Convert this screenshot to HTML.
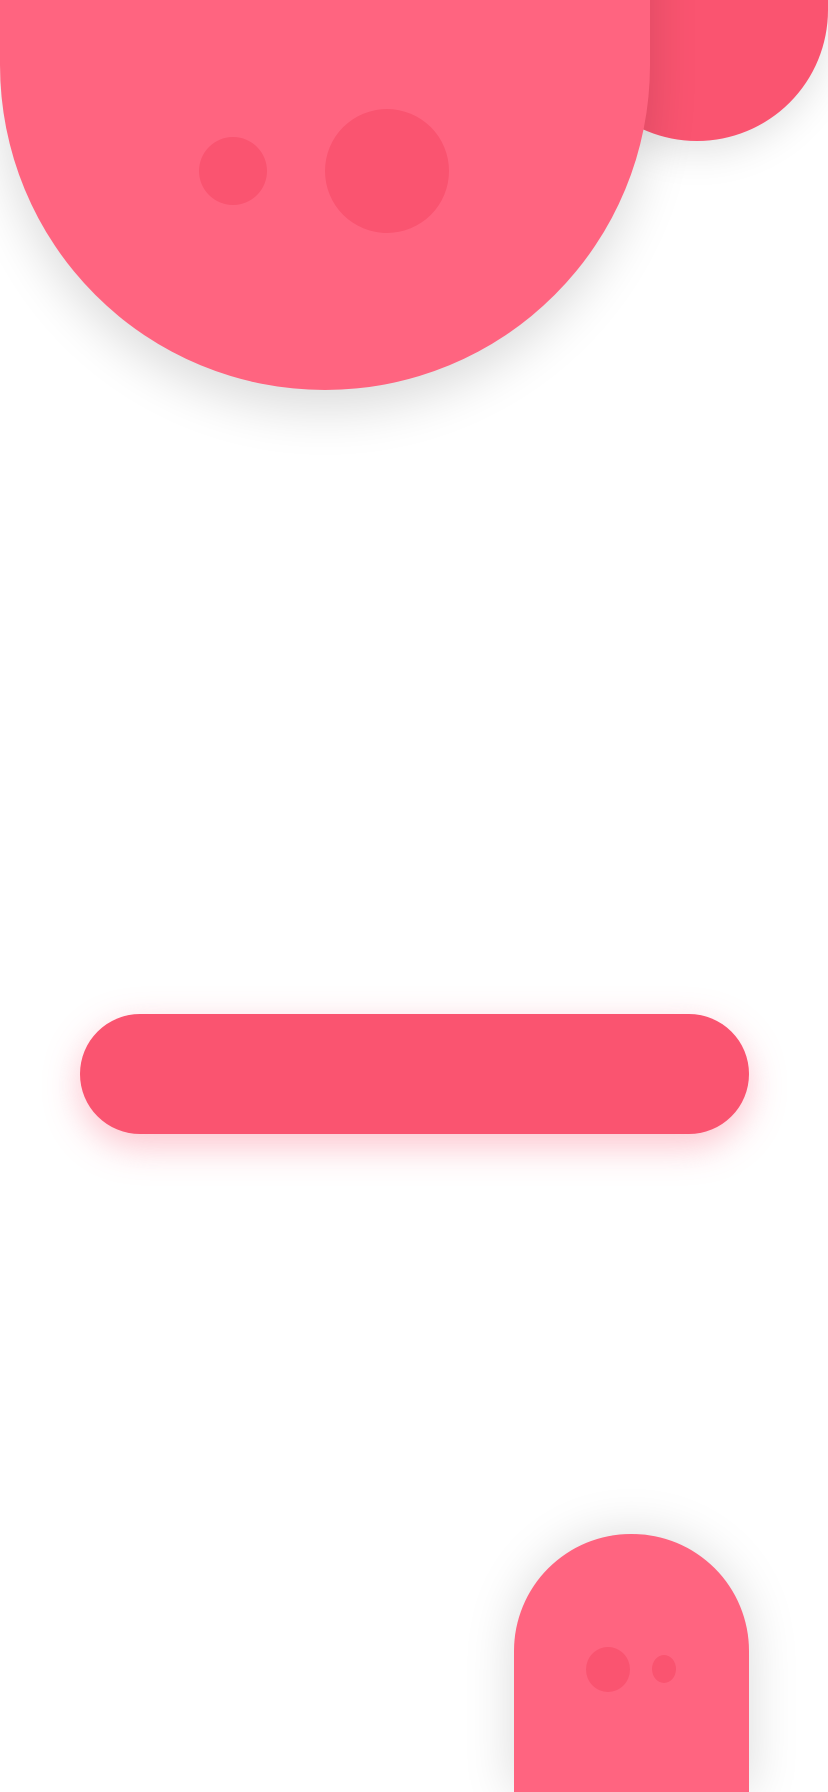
<!DOCTYPE html>
<html><head><meta charset="utf-8"><style>
html,body{margin:0;padding:0;width:828px;height:1792px;overflow:hidden;background:#fff;position:relative}
div{position:absolute;box-sizing:border-box}
.right{left:566px;top:-200px;width:262px;height:341px;background:#fa5470;border-radius:0 0 131px 131px;box-shadow:0 10px 40px rgba(0,0,0,0.12)}
.big{left:0;top:-100px;width:650px;height:490px;background:#ff6480;border-radius:0 0 325px 325px;box-shadow:0 20px 50px rgba(0,0,0,0.14)}
.d{background:#fa5470;border-radius:50%}
.btn{left:80px;top:1014px;width:669px;height:120px;border-radius:60px;background:#fa5470;box-shadow:0 12px 36px rgba(250,84,112,0.35)}
.bot{left:514px;top:1534px;width:235px;height:258px;border-radius:117px 117px 0 0;background:#ff6480;box-shadow:0 0 50px rgba(0,0,0,0.15)}
</style></head><body>
<div class="right"></div>
<div class="big"></div>
<div class="d" style="left:199px;top:137px;width:68px;height:68px"></div>
<div class="d" style="left:325px;top:109px;width:124px;height:124px"></div>
<div class="btn"></div>
<div class="bot"></div>
<div class="d" style="left:586px;top:1647px;width:44px;height:45px"></div>
<div class="d" style="left:652px;top:1655px;width:24px;height:28px"></div>
</body></html>
